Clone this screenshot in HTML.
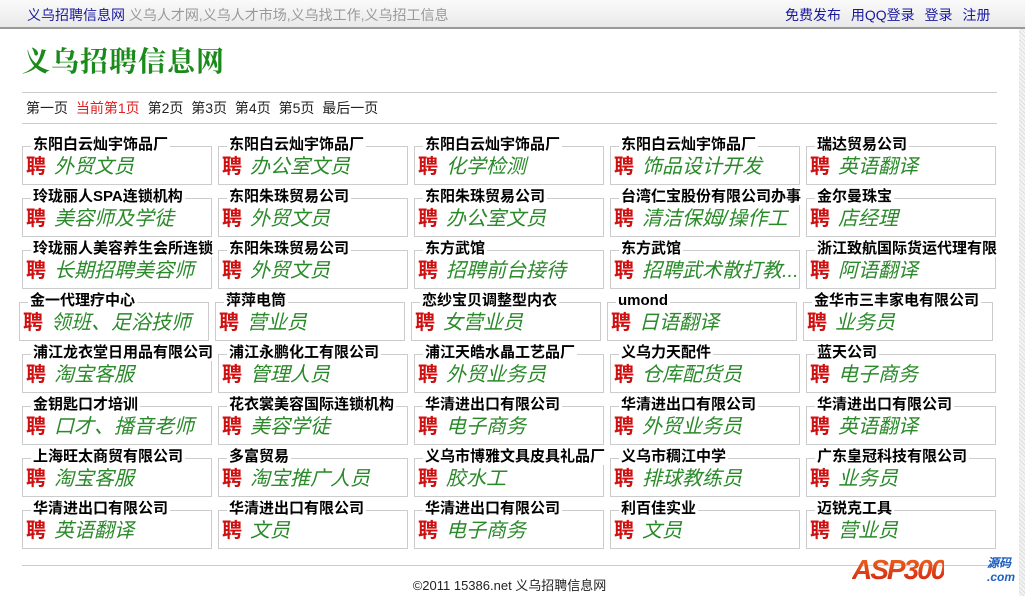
<!DOCTYPE html>
<html><head><meta charset="utf-8"><style>
body{margin:0;width:1025px;height:596px;position:relative;overflow:hidden;background:#fff;font-family:"Liberation Sans","Noto Sans CJK SC","WenQuanYi Zen Hei",sans-serif;}
.top{position:absolute;left:0;top:0;width:1025px;height:27px;background:linear-gradient(#fafafa,#e9e9e9);border-bottom:2px solid #999;}
.top .l{position:absolute;left:27px;top:5px;font-size:14px;color:#1a1aa0}
.top .l span{color:#999}
.top .r{position:absolute;left:785px;top:5px;font-size:14px;color:#1a1aa0;word-spacing:6px}
.sb{position:absolute;left:1019px;top:29px;width:6px;height:567px;background:repeating-linear-gradient(45deg,#ddd 0 1px,#f4f4f4 1px 3px);}
h1{position:absolute;left:22px;top:40px;margin:0;font-size:28px;font-weight:bold;color:#1a8a1a;font-family:"Noto Serif CJK SC",serif;letter-spacing:1px}
.hr{position:absolute;left:22px;width:975px;height:1px;background:#ccc}
.pg{position:absolute;left:26px;top:98px;font-size:14px;color:#222;word-spacing:4px}
.pg span{color:#d22}
.b{position:absolute;width:188px;height:37px;border:1px solid #ccc}
.b i{position:absolute;left:8px;top:-11px;background:#fff;font-style:normal;font-weight:bold;font-size:15px;line-height:17px;padding:0 2px;white-space:nowrap;color:#000}
.b b{position:absolute;left:3px;top:9px;font-size:20px;line-height:22px;color:#d01010}
.b em{position:absolute;left:31px;top:9px;font-size:20px;line-height:22px;color:#2a8a2a;white-space:nowrap}
.ft{position:absolute;left:0;width:1019px;top:575px;text-align:center;font-size:13px;color:#222}
.logo{position:absolute;left:852px;top:554px;font:bold italic 28px "Liberation Sans",sans-serif;letter-spacing:-2px;background:linear-gradient(#f06a20,#d02010);-webkit-background-clip:text;background-clip:text;color:transparent}
.logo small{font-size:12px;color:#2060c0;position:absolute;left:135px;top:2px;letter-spacing:0;line-height:14px}
</style></head><body>
<div class="top"><div class="l">义乌招聘信息网 <span>义乌人才网,义乌人才市场,义乌找工作,义乌招工信息</span></div><div class="r">免费发布 用QQ登录 登录 注册</div></div>
<div class="sb"></div>
<h1>义乌招聘信息网</h1>
<div class="hr" style="top:92px"></div>
<div class="pg">第一页 <span>当前第1页</span> 第2页 第3页 第4页 第5页 最后一页</div>
<div class="hr" style="top:123px"></div>
<div id="g"></div>
<div class="hr" style="top:565px"></div>
<div class="ft">©2011 15386.net 义乌招聘信息网</div>
<div class="logo">ASP300<small>源码<br>.com</small></div>
<script>
var d=[
[["东阳白云灿宇饰品厂","外贸文员"],["东阳白云灿宇饰品厂","办公室文员"],["东阳白云灿宇饰品厂","化学检测"],["东阳白云灿宇饰品厂","饰品设计开发"],["瑞达贸易公司","英语翻译"]],
[["玲珑丽人SPA连锁机构","美容师及学徒"],["东阳朱珠贸易公司","外贸文员"],["东阳朱珠贸易公司","办公室文员"],["台湾仁宝股份有限公司办事","清洁保姆/操作工"],["金尔曼珠宝","店经理"]],
[["玲珑丽人美容养生会所连锁","长期招聘美容师"],["东阳朱珠贸易公司","外贸文员"],["东方武馆","招聘前台接待"],["东方武馆","招聘武术散打教..."],["浙江致航国际货运代理有限","阿语翻译"]],
[["金一代理疗中心","领班、足浴技师"],["萍萍电筒","营业员"],["恋纱宝贝调整型内衣","女营业员"],["umond","日语翻译"],["金华市三丰家电有限公司","业务员"]],
[["浦江龙衣堂日用品有限公司","淘宝客服"],["浦江永鹏化工有限公司","管理人员"],["浦江天皓水晶工艺品厂","外贸业务员"],["义乌力天配件","仓库配货员"],["蓝天公司","电子商务"]],
[["金钥匙口才培训","口才、播音老师"],["花衣裳美容国际连锁机构","美容学徒"],["华清进出口有限公司","电子商务"],["华清进出口有限公司","外贸业务员"],["华清进出口有限公司","英语翻译"]],
[["上海旺太商贸有限公司","淘宝客服"],["多富贸易","淘宝推广人员"],["义乌市博雅文具皮具礼品厂","胶水工"],["义乌市稠江中学","排球教练员"],["广东皇冠科技有限公司","业务员"]],
[["华清进出口有限公司","英语翻译"],["华清进出口有限公司","文员"],["华清进出口有限公司","电子商务"],["利百佳实业","文员"],["迈锐克工具","营业员"]]];
var h="";
d.forEach(function(r,i){var sh=i==3?-3:0;r.forEach(function(c,j){
h+='<div class="b" style="left:'+(22+j*196+sh)+'px;top:'+(146+i*52)+'px"><i>'+c[0]+'</i><b>聘</b><em>'+c[1]+'</em></div>';});});
document.getElementById("g").innerHTML=h;
</script>
</body></html>
